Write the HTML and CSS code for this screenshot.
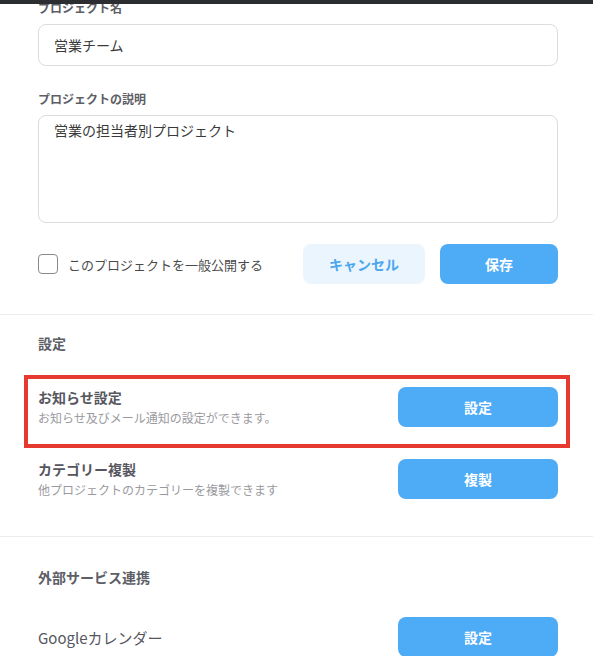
FILE: index.html
```html
<!DOCTYPE html>
<html lang="ja">
<head>
    <meta charset="UTF-8">
    <meta name="viewport" content="width=device-width, initial-scale=1.0">
    <title>プロジェクト設定</title>
    <link rel="stylesheet" href="styles.css">
</head>
<body>

    <div class="top-bar"></div>

    <section class="section project-form">
        <label class="field-label" for="projectName">プロジェクト名</label>
        <input class="text-input" type="text" id="projectName" name="projectName" value="営業チーム">

        <label class="field-label" for="projectDesc">プロジェクトの説明</label>
        <textarea class="text-area" id="projectDesc" name="projectDesc">営業の担当者別プロジェクト</textarea>

        <div class="form-actions">
            <label class="public-check">
                <input type="checkbox" name="isPublic">
                <span>このプロジェクトを一般公開する</span>
            </label>
            <button class="btn btn-cancel" type="button">キャンセル</button>
            <button class="btn btn-save" type="submit">保存</button>
        </div>
    </section>

    <section class="section settings">
        <h3>設定</h3>

        <div class="setting-row highlighted">
            <div class="setting-text">
                <div class="setting-title">お知らせ設定</div>
                <div class="setting-desc">お知らせ及びメール通知の設定ができます。</div>
            </div>
            <button class="btn btn-primary" type="button">設定</button>
        </div>

        <div class="setting-row">
            <div class="setting-text">
                <div class="setting-title">カテゴリー複製</div>
                <div class="setting-desc">他プロジェクトのカテゴリーを複製できます</div>
            </div>
            <button class="btn btn-primary" type="button">複製</button>
        </div>
    </section>

    <section class="section services">
        <h3>外部サービス連携</h3>

        <div class="setting-row">
            <div class="service-name">Googleカレンダー</div>
            <button class="btn btn-primary" type="button">設定</button>
        </div>
    </section>

</body>
</html>
```

FILE: styles.css
```css
body {
    font-family: 'Noto Sans CJK JP', 'Noto Sans', sans-serif;
    margin: 0;
    padding: 0;
    background-color: #fff;
    color: #4a4b55;
    overflow: hidden;
}

/* dark strip of the window above the scrolled content */
.top-bar {
    position: fixed;
    top: 0;
    left: 0;
    right: 0;
    height: 4px;
    background-color: #2c2d30;
    z-index: 10;
}

.section {
    padding: 0 35px 0 38px;
    border-bottom: 1px solid #ececec;
}

/* page is scrolled a little, so the first label is cut at the top */
.project-form {
    display: flex;
    flex-direction: column;
    margin-top: -1px;
    padding-bottom: 30px;
}

.field-label {
    font-size: 12px;
    font-weight: bold;
    line-height: 18px;
    color: #5d5e66;
    margin-bottom: 7px;
}

.text-input,
.text-area {
    width: 100%;
    box-sizing: border-box;
    border: 1px solid #dcdcdc;
    border-radius: 8px;
    font-family: inherit;
    font-size: 14px;
    color: #3a3a3a;
    outline: none;
}

.text-input {
    height: 42px;
    padding: 0 15px;
    margin-bottom: 24px;
}

.text-area {
    height: 108px;
    padding: 4px 15px;
    line-height: 20px;
    resize: none;
}

.form-actions {
    display: flex;
    align-items: center;
    margin-top: 21px;
}

.public-check {
    display: flex;
    align-items: center;
    flex: 1;
    font-size: 13px;
    color: #4a4a4a;
    cursor: pointer;
}

.public-check input[type="checkbox"] {
    appearance: none;
    width: 20px;
    height: 20px;
    margin: 0 10px 0 0;
    border: 1px solid #8a8a8a;
    border-radius: 4px;
    background-color: #fff;
}

.btn {
    height: 40px;
    border: none;
    border-radius: 8px;
    font-family: inherit;
    font-size: 14px;
    font-weight: bold;
    cursor: pointer;
}

.btn-cancel {
    width: 122px;
    background-color: #eaf5fe;
    color: #4ba6ee;
}

.btn-save {
    width: 118px;
    margin-left: 15px;
    background-color: #4eabf6;
    color: #fff;
}

.btn-primary {
    width: 160px;
    background-color: #4eabf6;
    color: #fff;
}

h3 {
    margin: 0;
    font-size: 14px;
    font-weight: bold;
    line-height: 20px;
    color: #5d5e66;
}

.settings {
    padding-top: 18px;
    padding-bottom: 37px;
}

.settings h3 {
    margin-bottom: 34px;
}

.setting-row {
    display: flex;
    align-items: center;
    justify-content: space-between;
    position: relative;
}

.setting-row + .setting-row {
    margin-top: 32px;
}

.setting-title {
    font-size: 14px;
    font-weight: bold;
    line-height: 20px;
    color: #55565e;
}

.setting-desc {
    font-size: 12px;
    line-height: 18px;
    margin-top: 2px;
    color: #9a9a9e;
}

/* red annotation frame drawn over the row */
.highlighted::after {
    content: '';
    position: absolute;
    top: -12px;
    left: -14px;
    right: -12px;
    bottom: -21px;
    border: 4px solid #e6392f;
    pointer-events: none;
}

.services {
    padding-top: 30px;
    border-bottom: none;
}

.services h3 {
    margin-bottom: 30px;
}

.service-name {
    font-size: 15px;
    color: #55565e;
}
```
